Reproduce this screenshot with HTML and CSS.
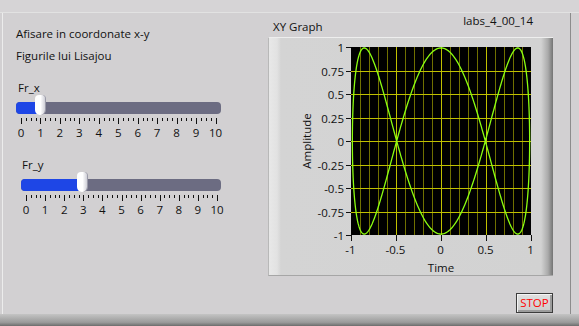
FILE: index.html
```html
<!DOCTYPE html>
<html lang="en">
<head>
    <meta charset="UTF-8">
    <title>labs_4_00_14</title>

    <link rel="stylesheet" href="styles.css">
</head>
<body>

    <div class="window">
        <div class="top-strip"></div>

        <div class="panel">
            <div class="controls">
                <p class="title">Afisare in coordonate x-y</p>
                <p class="title second">Figurile lui Lisajou</p>

                <div class="control fr-x">
                    <div class="label">Fr_x</div>
                    <div class="slide" style="--pos: 24px">
                        <div class="track"><div class="fill"></div></div>
                        <div class="thumb"></div>
                    </div>
                    <svg class="scale" width="225" height="22" data-from="5" data-step="19.45"></svg>
                </div>

                <div class="control fr-y">
                    <div class="label">Fr_y</div>
                    <div class="slide" style="--pos: 61px">
                        <div class="track"><div class="fill"></div></div>
                        <div class="thumb"></div>
                    </div>
                    <svg class="scale" width="225" height="22" data-from="5" data-step="19.1"></svg>
                </div>
            </div>

            <div class="graph-area">
                <div class="graph-head">
                    <span class="graph-label">XY Graph</span>
                    <span class="vi-name">labs_4_00_14</span>
                </div>

                <div class="frame">
                    <svg id="plot" width="284" height="238"></svg>
                </div>

                <button class="stop">STOP</button>
            </div>
        </div>

        <div class="bottom-strip"></div>
    </div>


    <script>
        var NS = 'http://www.w3.org/2000/svg';

        function el(parent, name, attrs, text) {
            var node = document.createElementNS(NS, name);
            for (var k in attrs) {
                node.setAttribute(k, attrs[k]);
            }
            if (text !== undefined) {
                node.textContent = text;
            }
            parent.appendChild(node);
            return node;
        }

        // slider scales 0..10
        function drawScales() {
            var scales = document.querySelectorAll('.scale');
            [].slice.call(scales).forEach(function(svg) {
                var from = Number(svg.getAttribute('data-from'));
                var step = Number(svg.getAttribute('data-step'));

                for (var i = 0; i <= 40; i++) {
                    var x = Math.round(from + i * step / 4) + 0.5;
                    var h = (i % 4 == 0) ? 6 : 3;
                    el(svg, 'line', {x1: x, y1: 0, x2: x, y2: h, class: 'tick'});
                }
                for (var n = 0; n <= 10; n++) {
                    el(svg, 'text', {x: from + n * step, y: 19, class: 'num'}, n);
                }
            });
        }

        function drawGraph() {
            var svg = document.getElementById('plot');
            var left = 82, top = 9, w = 180, h = 188;

            function px(x) { return left + (x + 1) / 2 * w; }
            function py(y) { return top + (1 - y) / 2 * h; }

            el(svg, 'rect', {x: left, y: top, width: w, height: h, class: 'bg'});

            // minor vertical lines every 0.1
            for (var i = 1; i < 20; i++) {
                var x = Math.round(left + i * 9) + 0.5;
                el(svg, 'line', {x1: x, y1: top, x2: x, y2: top + h, class: (i % 5 == 0) ? 'major' : 'minor'});
            }
            // horizontal lines every 0.25
            for (var j = 1; j < 8; j++) {
                var y = Math.round(top + j * h / 8) + 0.5;
                el(svg, 'line', {x1: left, y1: y, x2: left + w, y2: y, class: 'major'});
            }

            // y axis
            var yLabels = ['1', '0.75', '0.5', '0.25', '0', '-0.25', '-0.5', '-0.75', '-1'];
            yLabels.forEach(function(t, k) {
                var y = Math.round(top + k * h / 8) + 0.5;
                el(svg, 'line', {x1: left - 5, y1: y, x2: left, y2: y, class: 'tick'});
                el(svg, 'text', {x: left - 7, y: y + 4, class: 'ylab'}, t);
            });

            // x axis
            var xLabels = ['-1', '-0.5', '0', '0.5', '1'];
            xLabels.forEach(function(t, k) {
                var x = Math.round(left + k * w / 4) + 0.5;
                el(svg, 'line', {x1: x, y1: top + h, x2: x, y2: top + h + 6, class: 'tick'});
                el(svg, 'text', {x: x - 1, y: top + h + 19, class: 'xlab'}, t);
            });

            el(svg, 'text', {x: left + w / 2, y: 234, class: 'xlab'}, 'Time');
            el(svg, 'text', {x: 0, y: 0, class: 'xlab', transform: 'translate(42 103) rotate(-90)'}, 'Amplitude');

            // Lissajous: x = sin(t), y = cos(3t)
            var pts = [];
            for (var s = 0; s <= 600; s++) {
                var t = s / 600 * Math.PI * 2;
                pts.push(px(Math.sin(t) * 0.985).toFixed(2) + ',' + py(Math.cos(3 * t) * 0.99).toFixed(2));
            }
            el(svg, 'polyline', {points: pts.join(' '), class: 'curve'});
        }

        window.onload = function() {
            drawScales();
            drawGraph();
        }
    </script>
</body>
</html>
```

FILE: styles.css
```css
* {
    margin: 0;
    padding: 0;
}

body {
    background: #d2d0d2;
    font-family: "Open Sans", "Noto Sans", sans-serif;
    font-size: 11.5px;
    color: #111;
}

.window {
    width: 579px;
    height: 326px;
    display: flex;
    flex-direction: column;
    overflow: hidden;
}

.top-strip {
    height: 12px;
    background: #d6d4d6;
    border-bottom: 1px solid #e2e2e2;
}

.panel {
    flex: 1;
    display: flex;
    margin-left: 2px;
    margin-right: 8px;
    border-left: 1px solid #ececec;
    border-right: 1px solid #8c8c8c;
}

.bottom-strip {
    height: 12px;
    background: linear-gradient(#c4c4c4, #9a9a9a 70%, #6c6c6c);
}

/* left side */

.controls {
    width: 265px;
    padding-left: 13px;
    box-sizing: border-box;
}

.title {
    line-height: 16px;
    margin-top: 13px;
}

.title.second {
    margin-top: 6px;
}

.label {
    line-height: 14px;
}

.fr-x {
    margin-top: 17px;
}

.fr-x .label {
    margin-left: 2px;
}

.fr-y {
    margin-top: 18px;
    margin-left: 5px;
}

.fr-y .label {
    margin-left: 1px;
}

.slide {
    position: relative;
    height: 20px;
    width: 205px;
}

.fr-y .slide {
    width: 200px;
}

.track {
    position: absolute;
    left: 0;
    right: 0;
    top: 7px;
    height: 12px;
    border-radius: 4px;
    background: #6c6c82;
    overflow: hidden;
}

.fill {
    height: 100%;
    width: var(--pos);
    background: #1e46e6;
}

.thumb {
    position: absolute;
    top: 0;
    left: calc(var(--pos) - 5px);
    width: 10px;
    height: 20px;
    border-radius: 4px 4px 5px 5px;
    background: linear-gradient(to right, #ffffff 55%, #d0d0d8);
    box-shadow: 1px 0 0 #9a9aa8;
}

.scale {
    display: block;
    margin-top: 3px;
    overflow: visible;
}

.tick {
    stroke: #111;
    stroke-width: 1;
}

.num {
    font-size: 11.5px;
    text-anchor: middle;
    fill: #111;
}

/* right side */

.graph-area {
    width: 285px;
    display: flex;
    flex-direction: column;
}

.graph-head {
    display: flex;
    justify-content: space-between;
    height: 24px;
}

.graph-label {
    margin-top: 6px;
    margin-left: 5px;
    line-height: 16px;
}

.vi-name {
    margin-right: 20px;
    line-height: 16px;
}

.frame {
    width: 285px;
    height: 239px;
    box-sizing: border-box;
    border-top: 1px solid #eeeeee;
    border-left: 1px solid #b8b8b8;
    border-bottom: 1px solid #a6a6a6;
    background: linear-gradient(to right, #e8e8e8 0, #e2e2e2 8px, #d4d4d4 12px, #d2d2d2 calc(100% - 12px), #aaaaaa calc(100% - 5px), #747474 100%);
}

#plot {
    display: block;
    font-family: "Open Sans", "Noto Sans", sans-serif;
}

#plot .bg {
    fill: #000;
}

#plot .minor {
    stroke: #707000;
    stroke-width: 1;
}

#plot .major {
    stroke: #c0c000;
    stroke-width: 1;
}

#plot .curve {
    fill: none;
    stroke: #8cff10;
    stroke-width: 1.3;
}

#plot .ylab {
    font-size: 11.5px;
    text-anchor: end;
    fill: #111;
}

#plot .xlab {
    font-size: 11.5px;
    text-anchor: middle;
    fill: #111;
}

.stop {
    align-self: flex-end;
    margin-top: 17px;
    width: 37px;
    height: 20px;
    border: 1px solid #3c3c3c;
    background: linear-gradient(#e0e0e0, #cccccc);
    box-shadow: inset 1px 1px 0 #f4f4f4, inset -2px -2px 0 #9c9c9c;
    color: #ff0000;
    font-family: "Open Sans", "Noto Sans", sans-serif;
    font-size: 11.5px;
    line-height: 16px;
}
```
